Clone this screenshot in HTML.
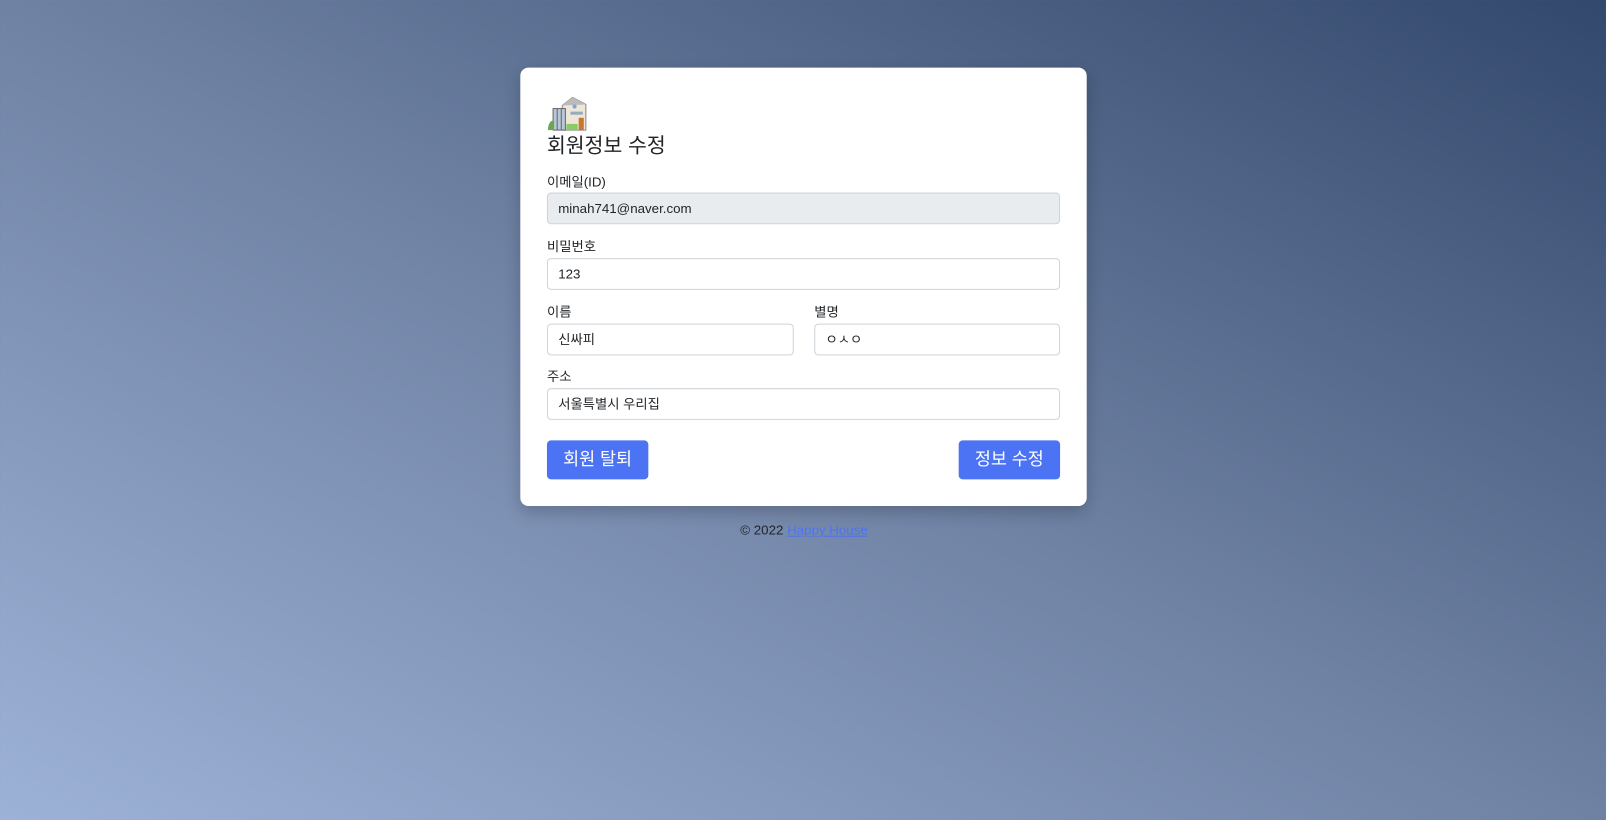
<!DOCTYPE html>
<html><head><meta charset="utf-8"><style>
*{box-sizing:border-box;margin:0;padding:0}
body{width:1606px;height:820px;overflow:hidden;background:linear-gradient(to top right,#9db2d7 0%,#6f82a4 50%,#32486c 100%);font-family:"Liberation Sans","Noto Sans CJK KR",sans-serif;color:#212529;position:relative}
.wrap{position:absolute;left:0;top:0;width:1568px;height:801px;transform:scale(1.02423);transform-origin:0 0}
.card{position:absolute;left:508px;top:66px;width:553px;height:428px;background:#fff;border-radius:8px;box-shadow:0 6px 16px rgba(0,0,0,.2)}
.a{position:absolute}
.lbl{font-size:13px;line-height:16px}
.inp{height:31px;border:1px solid #ced4da;border-radius:4px;font-size:13px;line-height:29px;padding-left:10px;background:#fff}
.btn{height:38px;background:#4b73f4;color:#fff;border-radius:4px;font-size:17px;line-height:38px;text-align:center}
</style></head><body>
<div class="wrap">
<div class="card">
<svg class="a" style="left:27px;top:27px" width="39" height="35" viewBox="0 0 39 35">
<polygon points="14,10 24,2 37,9 37,34 14,34" fill="#eee6d8" stroke="#888" stroke-width="1"/>
<polygon points="14,10 24,2 37,9" fill="#bbb"/>
<circle cx="26" cy="11" r="2" fill="#7aa7d6"/>
<rect x="22" y="16" width="12" height="3" fill="#9ab"/>
<rect x="30" y="22" width="5" height="12" fill="#c8782e"/>
<rect x="5" y="13" width="12" height="21" fill="#b8c8d8" stroke="#666" stroke-width="1"/>
<line x1="9" y1="13" x2="9" y2="34" stroke="#666"/><line x1="13" y1="13" x2="13" y2="34" stroke="#666"/>
<path d="M0,34 C0,26 4,24 6,25 L6,34Z" fill="#6aa84f"/>
<rect x="18" y="28" width="11" height="6" fill="#8c6"/>
</svg>
<div class="a" style="left:26px;top:64px;font-size:20px;line-height:26px">회원정보 수정</div>
<div class="a lbl" style="left:26px;top:104px">이메일(ID)</div>
<div class="a inp" style="left:26px;top:122px;width:501px;background:#e9ecef">minah741@naver.com</div>
<div class="a lbl" style="left:26px;top:167px">비밀번호</div>
<div class="a inp" style="left:26px;top:186px;width:501px">123</div>
<div class="a lbl" style="left:26px;top:231px">이름</div>
<div class="a inp" style="left:26px;top:250px;width:241px">신싸피</div>
<div class="a lbl" style="left:287px;top:231px">별명</div>
<div class="a inp" style="left:287px;top:250px;width:240px">ㅇㅅㅇ</div>
<div class="a lbl" style="left:26px;top:294px">주소</div>
<div class="a inp" style="left:26px;top:313px;width:501px">서울특별시 우리집</div>
<div class="a btn" style="left:26px;top:364px;width:99px">회원 탈퇴</div>
<div class="a btn" style="left:428px;top:364px;width:99px">정보 수정</div>
</div>
<div class="a" style="left:0;width:1570px;top:510px;text-align:center;font-size:13px;line-height:16px;color:#212529">© 2022 <span style="color:#4b73f4;text-decoration:underline">Happy House</span></div>
</div>
</body></html>
